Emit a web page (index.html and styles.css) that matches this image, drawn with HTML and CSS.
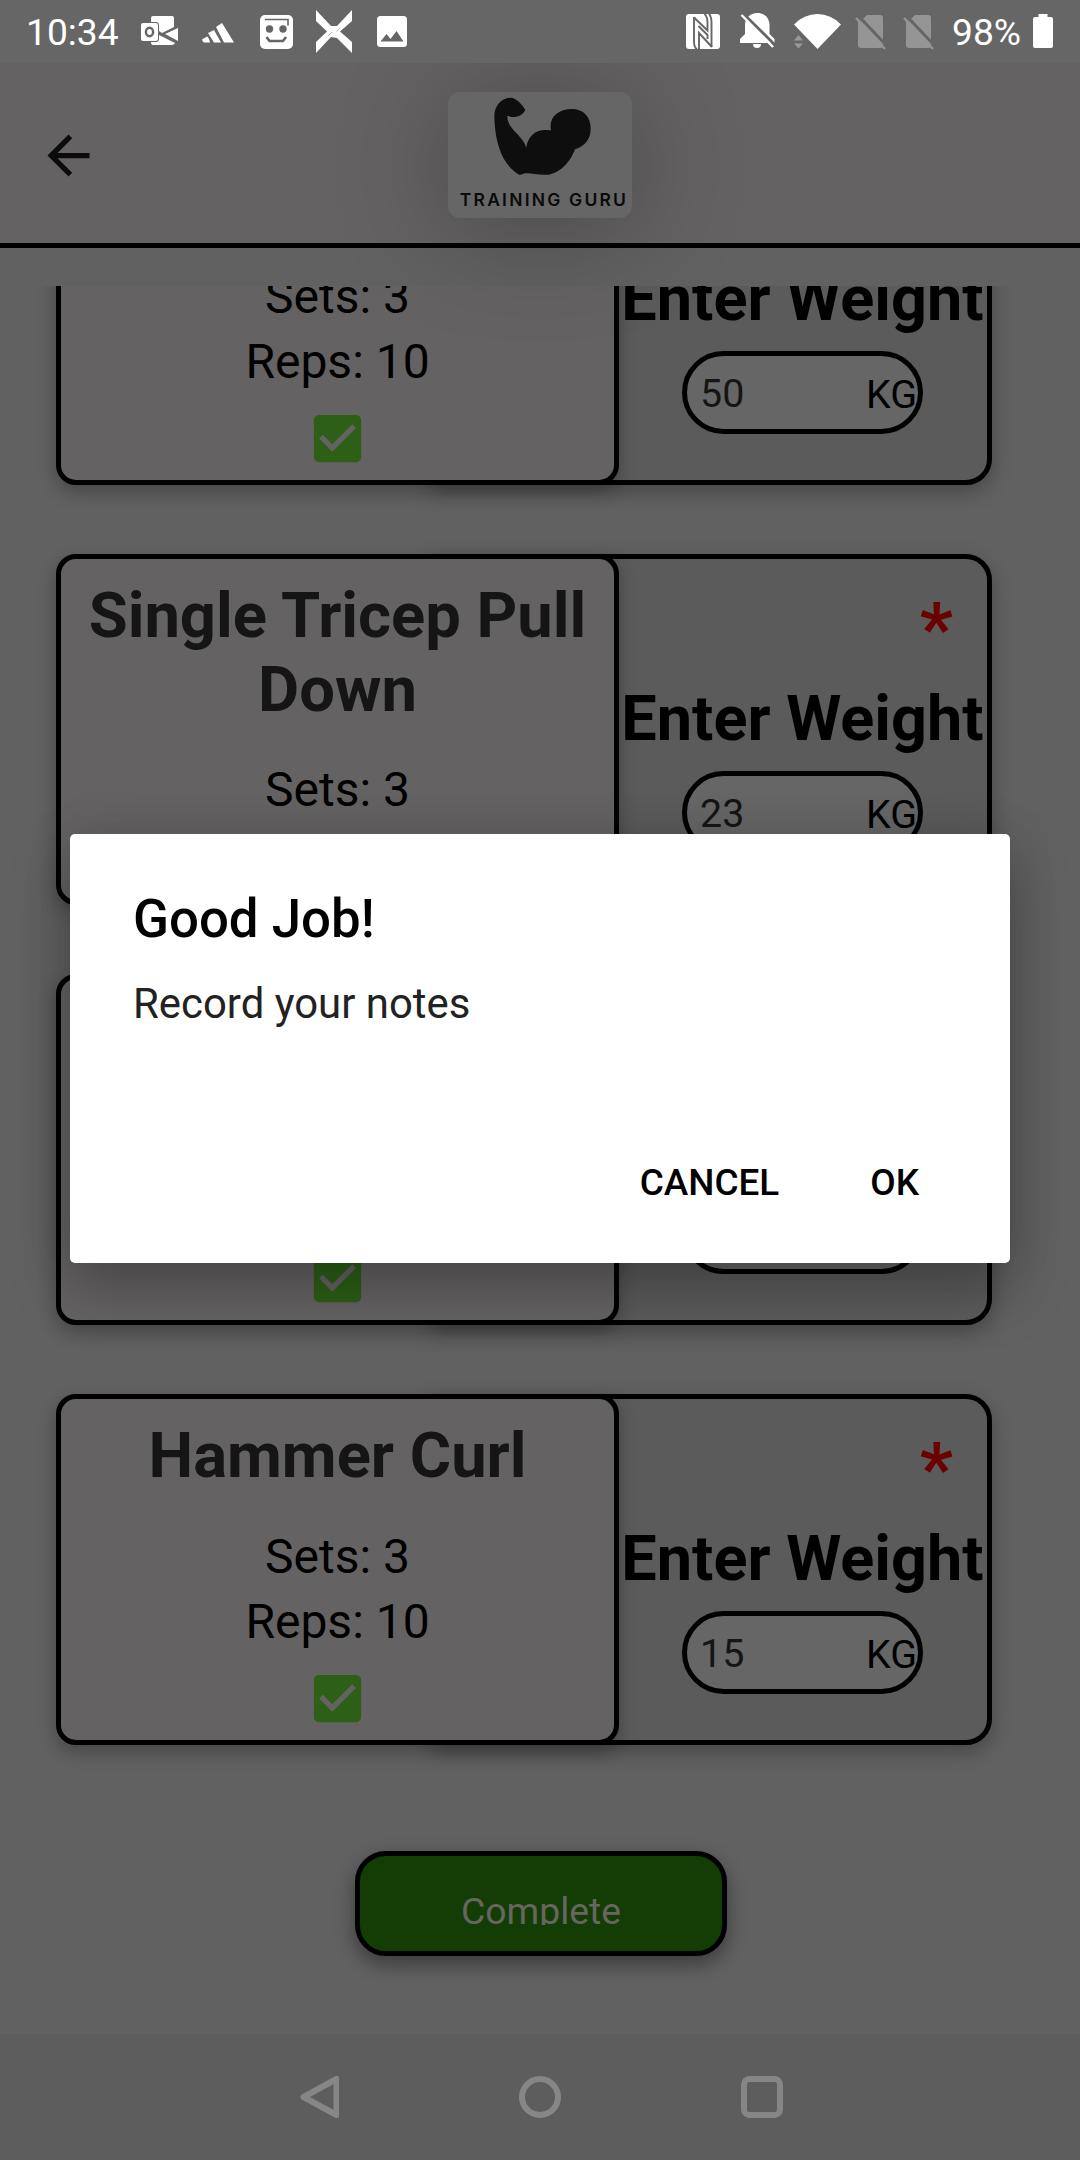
FILE: index.html
```html
<!DOCTYPE html>
<html lang="en">
<head>
<meta charset="utf-8">
<title>Training Guru</title>
<link rel="stylesheet" href="styles.css">
</head>
<body>
<div class="screen">
  <div class="status">
    <span class="clock">10:34</span>
    <svg class="ic-outlook" width="37" height="30" viewBox="0 0 37 30"><path fill="#fff" d="M12 0h19q2 0 2 2v9l-12 6-3-2V9q0-3-3-3h-5V2q0-2 2-2zM37 12v13l-13-7zM10 26h5q3 0 3-3v-4l16 8q-1 2-3 2H12q-2 0-2-3z"/><rect y="7" width="17" height="18" rx="2" fill="#fff"/><ellipse cx="8.500" cy="16" rx="3.600" ry="4.200" fill="none" stroke="#666" stroke-width="2.400"/></svg>
    <svg class="ic-adidas" width="32" height="21" viewBox="0 0 32 21"><path fill="#fff" d="M0 17.500l5-3q2 1 3 6H2q-2-1-2-3zM6 11l6-3 7 12.500h-7zM14 5l6-4 12 19.500H22z"/></svg>
    <svg class="ic-face" width="33" height="34" viewBox="0 0 33 34"><rect width="33" height="34" rx="5" fill="#fff"/><path d="M5 4.500h23v6" fill="none" stroke="#666" stroke-width="1.600"/><circle cx="9.500" cy="14" r="3.700" fill="#666"/><circle cx="23" cy="14" r="3.700" fill="#666"/><path d="M6.500 22l3 4h13.500l3-4" fill="none" stroke="#666" stroke-width="2.600"/></svg>
    <svg class="ic-x" width="36" height="43" viewBox="0 0 36 43"><path fill="#fff" d="M0 0l15 16 6 0L36 0v11L24 21.500 36 32v11L21 28l-6-1L0 43V32l11-10.500L0 11z"/><path d="M12 26l4-4M20.500 21.500l4-4" stroke="#999" stroke-width=".7"/></svg>
    <svg class="ic-img" width="30" height="31" viewBox="0 0 30 31"><rect width="30" height="31" rx="3.500" fill="#fff"/><path fill="#666" d="M3.500 25.500l6-7.500 4 5 6-8 7 10.500z"/></svg>
    <span class="spacer"></span>
    <svg class="ic-nfc" width="34" height="35" viewBox="0 0 34 35"><rect width="34" height="35" rx="3" fill="#fff"/><g fill="none" stroke="#666" stroke-width="1.900"><path d="M8 3v25q0 5 3 7.500"/><path d="M8 3.500l13.500 13V8q0-5-3-8.500"/><path d="M25.500 33V8q0-5-2.500-8.500"/><path d="M26 33L13 19v16"/><path d="M12.500 12l9 9v4"/></g></svg>
    <svg class="ic-bell" width="35" height="35" viewBox="0 0 35 35"><path fill="#fff" d="M17.500 0c7 0 12 5 12 12v9l5 5v4H0v-4l5-5v-9C5 5 10 0 17.500 0zM13 31h8q0 4-4 4t-4-4z"/><path d="M3 .500L35 32" stroke="#666" stroke-width="3"/><path d="M1.500 2L33 34" stroke="#fff" stroke-width="2.400"/></svg>
    <svg class="ic-wifi" width="47" height="35" viewBox="0 0 47 35"><path fill="#fff" d="M0 10.500Q10 0 23.500 0T47 10.500L23.500 35z"/><path fill="#999" d="M0 26.500l4.500-5.500 4.500 5.500zM0 29.500h9L4.500 34.500z"/></svg>
    <svg class="ic-sim" width="31" height="35" viewBox="0 0 31 35"><path fill="#959595" d="M8 4l4-4h13q3 0 3 3v27q0 3-3 3H6q-3 0-3-3V7z"/><path d="M3 .500L32 31" stroke="#666" stroke-width="3"/><path d="M1 3L30 34" stroke="#959595" stroke-width="2.400"/></svg>
    <svg class="ic-sim2" width="31" height="35" viewBox="0 0 31 35"><path fill="#959595" d="M8 4l4-4h13q3 0 3 3v27q0 3-3 3H6q-3 0-3-3V7z"/><path d="M3 .500L32 31" stroke="#666" stroke-width="3"/><path d="M1 3L30 34" stroke="#959595" stroke-width="2.400"/></svg>
    <span class="pct">98%</span>
    <svg class="ic-bat" width="20" height="34" viewBox="0 0 20 34"><path fill="#fff" d="M5.500 0h9v3H18q2 0 2 2v27q0 2-2 2H2q-2 0-2-2V5q0-2 2-2h3.500z"/></svg>
  </div>

  <header class="header">
    <svg class="back" width="63" height="63" viewBox="0 0 24 24"><path fill="#0b0b0b" d="M20 11H7.830l5.590-5.590L12 4l-8 8 8 8 1.410-1.410L7.830 13H20v-2z"/></svg>
    <div class="logo">
      <svg width="184" height="90" viewBox="144 96 552 270"><path fill="#0e0e0e" d="M283 170C282 140 303 113 333 113C347 113 367 133 376 150C368 166 350 174 330 170C325 167 321 165 322 172C322 190 338 208 352 222C366 237 375 250 379 263C382 232 405 210 435 210L453 211C445 172 475 147 515 147C552 147 573 172 572 207C572 236 556 258 525 268C512 305 480 340 445 344C415 346 395 339 375 340L359 345C330 328 308 300 297 262C288 232 284 205 283 170Z"/></svg>
      <span class="brand">TRAINING GURU</span>
    </div>
  </header>

  <main class="list">
    <div class="cards">
      <section class="card">
        <div class="info">
          <h2 class="name"></h2>
          <p class="line">Sets: 3</p>
          <p class="line">Reps: 10</p>
          <svg class="check" width="63" height="63" viewBox="0 0 24 24"><path d="M19 3H5c-1.110 0-2 .9-2 2v14c0 1.100.89 2 2 2h14c1.110 0 2-.9 2-2V5c0-1.100-.89-2-2-2zm-9 14l-5-5 1.410-1.410L10 14.170l7.590-7.590L19 8l-9 9z"/></svg>
        </div>
        <div class="weight">
          <span class="req"></span>
          <span class="label">Enter Weight</span>
          <div class="field"><span class="value">50</span><span class="unit">KG</span></div>
        </div>
      </section>
      <section class="card">
        <div class="info">
          <h2 class="name">Single Tricep Pull Down</h2>
          <p class="line">Sets: 3</p>
        </div>
        <div class="weight">
          <span class="req">*</span>
          <span class="label">Enter Weight</span>
          <div class="field"><span class="value">23</span><span class="unit">KG</span></div>
        </div>
      </section>
      <section class="card">
        <div class="info">
          <h2 class="name"></h2>
          <p class="line"></p>
          <p class="line"></p>
          <svg class="check" width="63" height="63" viewBox="0 0 24 24"><path d="M19 3H5c-1.110 0-2 .9-2 2v14c0 1.100.89 2 2 2h14c1.110 0 2-.9 2-2V5c0-1.100-.89-2-2-2zm-9 14l-5-5 1.410-1.410L10 14.170l7.590-7.590L19 8l-9 9z"/></svg>
        </div>
        <div class="weight">
          <span class="req"></span>
          <span class="label"></span>
          <div class="field"></div>
        </div>
      </section>
      <section class="card">
        <div class="info">
          <h2 class="name">Hammer Curl</h2>
          <p class="line">Sets: 3</p>
          <p class="line">Reps: 10</p>
          <svg class="check" width="63" height="63" viewBox="0 0 24 24"><path d="M19 3H5c-1.110 0-2 .9-2 2v14c0 1.100.89 2 2 2h14c1.110 0 2-.9 2-2V5c0-1.100-.89-2-2-2zm-9 14l-5-5 1.410-1.410L10 14.170l7.590-7.590L19 8l-9 9z"/></svg>
        </div>
        <div class="weight">
          <span class="req">*</span>
          <span class="label">Enter Weight</span>
          <div class="field"><span class="value">15</span><span class="unit">KG</span></div>
        </div>
      </section>
    </div>
    <div class="complete"><span class="complete-text">Complete</span></div>
  </main>

  <nav class="nav">
    <svg width="42" height="44" viewBox="0 0 42 44"><path d="M39 4v36L6 22z" transform="translate(0.500 0)" fill="none" stroke="#868686" stroke-width="6" stroke-linejoin="round"/></svg>
    <svg width="42" height="44" viewBox="0 0 42 44"><circle cx="21" cy="22" r="18" fill="none" stroke="#868686" stroke-width="6"/></svg>
    <svg width="42" height="44" viewBox="0 0 42 44"><rect x="3" y="4" width="36" height="36" rx="5.500" fill="none" stroke="#868686" stroke-width="6"/></svg>
  </nav>

  <div class="dialog">
    <h1 class="dialog-title">Good Job!</h1>
    <p class="dialog-text">Record your notes</p>
    <div class="actions"><span>CANCEL</span><span>OK</span></div>
  </div>
</div>
</body>
</html>
```
FILE: styles.css
```css
* { box-sizing: border-box; }
body { margin: 0; font-family: Roboto, "Noto Sans", sans-serif; }
h1, h2, p { margin: 0; }
svg { display: block; flex: none; }

.screen {
  position: relative;
  display: flex;
  flex-direction: column;
  width: 1080px;
  height: 2160px;
  overflow: hidden;
  background: #616161;
}

.status {
  position: relative;
  z-index: 3;
  flex: none;
  display: flex;
  align-items: flex-start;
  height: 63px;
  padding: 0 27px 0 26px;
  background: #666;
  color: #fff;
  font-size: 37.200px;
  line-height: 43px;
}
.clock { width: 115px; margin-top: 11px; }
.spacer { flex: 1; }
.pct { width: 81px; margin: 11px 0 0 18px; }
.ic-outlook { margin-top: 16px; }
.ic-adidas { margin: 22px 0 0 24px; }
.ic-face { margin: 15px 0 0 26px; }
.ic-x { margin: 10px 0 0 23px; }
.ic-img { margin: 16px 0 0 25px; }
.ic-nfc { margin-top: 14px; }
.ic-bell { margin: 13px 0 0 20px; }
.ic-wifi { margin: 14px 0 0 19px; }
.ic-sim { margin: 15px 0 0 14px; }
.ic-sim2 { margin: 15px 0 0 17px; }
.ic-bat { margin-top: 14px; }

.header {
  position: relative;
  z-index: 2;
  flex: none;
  display: flex;
  align-items: flex-start;
  height: 184.500px;
  padding: 29px 0 0 37px;
  border-bottom: 5px solid #000;
  background: #656263;
}
.back { margin-top: 32px; }
.logo {
  display: flex;
  flex-direction: column;
  align-items: center;
  width: 184px;
  height: 126px;
  margin-left: 348px;
  border-radius: 12px;
  background: #666;
  box-shadow: 0 10px 110px rgba(0, 0, 0, .28);
}
.brand {
  padding-left: 8px;
  font-family: Inter, sans-serif;
  font-size: 17.500px;
  font-weight: 600;
  line-height: 35px;
  letter-spacing: 2.200px;
  color: #0a0a0a;
  white-space: nowrap;
}

.list {
  flex: none;
  display: flex;
  flex-direction: column;
  height: 1748px;
  margin-top: 38.500px;
  padding-left: 53px;
  overflow: hidden;
}
.cards {
  display: flex;
  flex-direction: column;
  gap: 69px;
  margin: -152px 0 0 3px;
}
.card { display: flex; height: 351px; }
.info {
  position: relative;
  z-index: 1;
  display: flex;
  flex-direction: column;
  align-items: center;
  width: 563px;
  padding-top: 20px;
  border: 5px solid #000;
  border-radius: 20px;
  background: #656263;
  box-shadow: 0 7px 18px rgba(0, 0, 0, .28);
}
.name {
  min-height: 73.500px;
  margin-bottom: 31px;
  font-size: 63.300px;
  font-weight: 700;
  line-height: 73.500px;
  text-align: center;
  color: #151515;
}
.line { height: 65.300px; font-size: 48px; line-height: 65.300px; color: #000; }
.check { margin-top: 12.500px; fill: #2d5f17; }

.weight {
  display: flex;
  flex-direction: column;
  align-items: center;
  width: 562px;
  margin-left: -189px;
  padding-left: 183px;
  border: 5px solid #000;
  border-radius: 5px 26px 26px 5px;
  background: #5b5b5b;
  box-shadow: 0 7px 20px rgba(0, 0, 0, .28);
}
.req {
  align-self: flex-end;
  height: 123px;
  padding: 27px 34px 0 0;
  font-size: 73px;
  font-weight: 700;
  line-height: 86px;
  color: #6a0000;
}
.label {
  height: 73.500px;
  font-size: 63px;
  font-weight: 700;
  line-height: 73.500px;
  white-space: nowrap;
  color: #000;
}
.field {
  flex: none;
  display: flex;
  justify-content: space-between;
  width: 241px;
  height: 83px;
  margin-top: 15.500px;
  padding: 15px 1px 0 13px;
  border: 5px solid #000;
  border-radius: 41.500px;
  background: #666;
  font-size: 39.400px;
  line-height: 46px;
}
.value { color: #151515; }
.unit { padding-top: 1px; color: #000; }

.complete {
  flex: none;
  width: 372px;
  height: 105px;
  margin: 106px 0 0 302px;
  padding-top: 33px;
  border: 5px solid #000;
  border-radius: 31px;
  background: #143d05;
  box-shadow: 0 8px 20px rgba(0, 0, 0, .4);
  text-align: center;
}
.complete-text {
  display: block;
  height: 36px;
  overflow: hidden;
  font-size: 37.300px;
  line-height: 44px;
  color: #66665f;
}

.nav {
  flex: none;
  display: flex;
  gap: 180px;
  height: 126px;
  padding: 41px 0 0 297px;
  background: #5d5d5d;
}

.dialog {
  position: absolute;
  z-index: 4;
  left: 70px;
  top: 834px;
  width: 940px;
  height: 429px;
  padding: 54px 63px 0;
  border-radius: 5px;
  background: #fff;
  box-shadow: 0 26px 60px rgba(0, 0, 0, .26), 0 0 50px rgba(0, 0, 0, .1);
}
.dialog-title { font-size: 52.800px; font-weight: 500; line-height: 62px; }
.dialog-text { margin-top: 29px; font-size: 41.900px; line-height: 49px; color: #222; }
.actions {
  display: flex;
  justify-content: flex-end;
  gap: 91px;
  margin-top: 133px;
  padding-right: 28px;
  font-size: 36.900px;
  font-weight: 500;
  line-height: 43px;
}
```
